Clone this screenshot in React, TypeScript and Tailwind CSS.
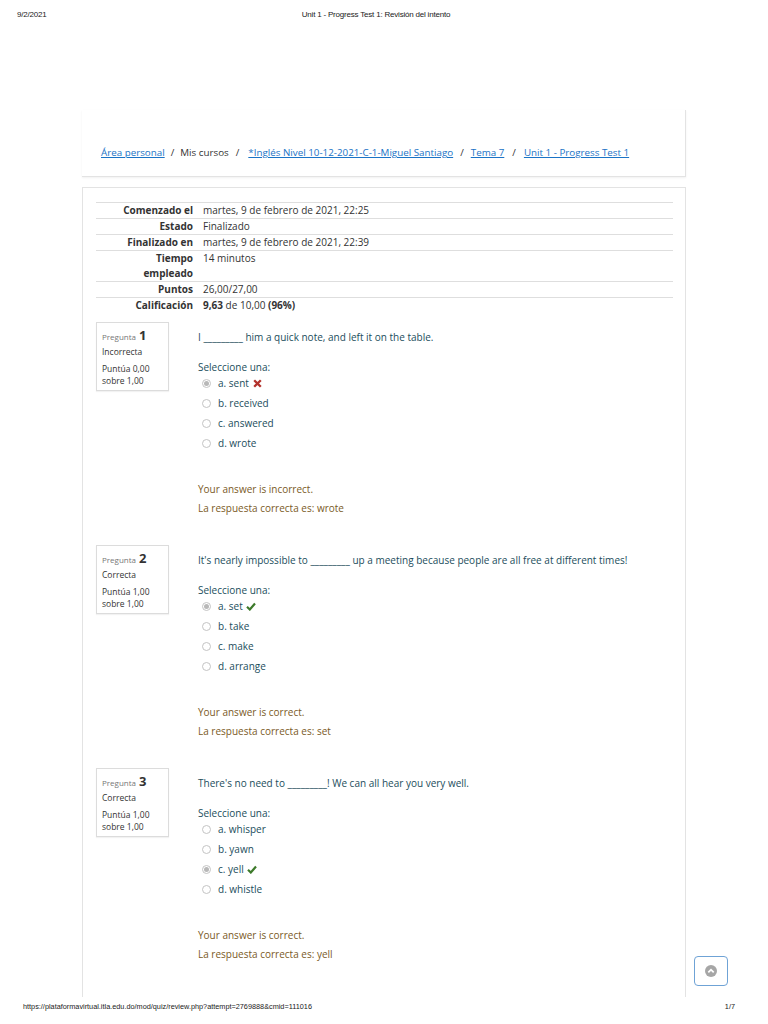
import { ReactNode } from "react";

type Option = { key: string; label: string; chosen?: boolean; mark?: "ok" | "bad" };

const questions: {
  n: number;
  state: string;
  score: string;
  text: string;
  options: Option[];
  feedback: string;
  right: string;
}[] = [
  {
    n: 1,
    state: "Incorrecta",
    score: "Puntúa 0,00",
    text: "I _________ him a quick note, and left it on the table.",
    options: [
      { key: "a", label: "sent", chosen: true, mark: "bad" },
      { key: "b", label: "received" },
      { key: "c", label: "answered" },
      { key: "d", label: "wrote" },
    ],
    feedback: "Your answer is incorrect.",
    right: "wrote",
  },
  {
    n: 2,
    state: "Correcta",
    score: "Puntúa 1,00",
    text: "It's nearly impossible to _________ up a meeting because people are all free at different times!",
    options: [
      { key: "a", label: "set", chosen: true, mark: "ok" },
      { key: "b", label: "take" },
      { key: "c", label: "make" },
      { key: "d", label: "arrange" },
    ],
    feedback: "Your answer is correct.",
    right: "set",
  },
  {
    n: 3,
    state: "Correcta",
    score: "Puntúa 1,00",
    text: "There's no need to _________! We can all hear you very well.",
    options: [
      { key: "a", label: "whisper" },
      { key: "b", label: "yawn" },
      { key: "c", label: "yell", chosen: true, mark: "ok" },
      { key: "d", label: "whistle" },
    ],
    feedback: "Your answer is correct.",
    right: "yell",
  },
];

const summary: [string, ReactNode][] = [
  ["Comenzado el", "martes, 9 de febrero de 2021, 22:25"],
  ["Estado", "Finalizado"],
  ["Finalizado en", "martes, 9 de febrero de 2021, 22:39"],
  ["Tiempo empleado", "14 minutos"],
  ["Puntos", "26,00/27,00"],
  [
    "Calificación",
    <>
      <b>9,63</b> de 10,00 <b>(96%)</b>
    </>,
  ],
];

const Radio = ({ checked }: { checked?: boolean }) => (
  <span className="w-[9px] h-[9px] rounded-full border border-[#c4c4c4] bg-white flex items-center justify-center shrink-0">
    {checked && <span className="w-[5px] h-[5px] rounded-full bg-[#b8b8b8]" />}
  </span>
);

const Check = () => (
  <svg width="10" height="9" viewBox="0 0 10 9" className="ml-[3px]">
    <path d="M1 4.8 L3.8 7.5 L9 1.5" fill="none" stroke="#3d7a2a" strokeWidth="2.2" />
  </svg>
);

const Cross = () => (
  <svg width="9" height="9" viewBox="0 0 9 9" className="ml-[4px]">
    <path d="M1.2 1.2 L7.8 7.8 M7.8 1.2 L1.2 7.8" stroke="#b3322c" strokeWidth="2.3" />
  </svg>
);

const Question = ({ q }: { q: (typeof questions)[number] }) => (
  <div className="flex h-[223px]">
    <div className="w-[73px] h-[69px] border border-[#dcdcdc] shadow-[0_1px_1px_rgba(0,0,0,0.05)] px-[5px] pt-[5px] text-[8.5px] leading-[12px] text-[#333] shrink-0">
      <div className="flex items-baseline gap-[3px]">
        <span className="text-[8px] text-[#777]">Pregunta</span>
        <span className="text-[13px] font-bold leading-[14px]">{q.n}</span>
      </div>
      <div className="mt-[3px]">{q.state}</div>
      <div className="mt-[5px]">{q.score}</div>
      <div>sobre 1,00</div>
    </div>
    <div className="ml-[29px] pt-[8px] text-[10px] font-medium text-[#1b4d5c]">
      <p className="leading-[14px]">{q.text}</p>
      <p className="mt-[16px] leading-[14px]">Seleccione una:</p>
      <div className="flex flex-col -mt-[1px]">
        {q.options.map((o) => (
          <div key={o.key} className="h-[20px] flex items-center pl-[4px]">
            <Radio checked={o.chosen} />
            <span className="ml-[7px]">
              {o.key}. {o.label}
            </span>
            {o.mark === "ok" && <Check />}
            {o.mark === "bad" && <Cross />}
          </div>
        ))}
      </div>
      <div className="mt-[29px] text-[#7a5a26] leading-[14px]">
        <p>{q.feedback}</p>
        <p className="mt-[5px]">La respuesta correcta es: {q.right}</p>
      </div>
    </div>
  </div>
);

export default function App() {
  return (
    <div className="relative w-[768px] h-[1024px] bg-white overflow-hidden font-['Open_Sans',sans-serif]">
      <header className="h-[110px] pt-[10px] px-[17px] flex text-[8px] leading-[10px] text-[#222] font-['Liberation_Sans',sans-serif] tracking-[-0.2px]">
        <span className="w-[100px]">9/2/2021</span>
        <span className="flex-1 text-center pr-[116px]">Unit 1 - Progress Test 1: Revisión del intento</span>
      </header>

      <div className="ml-[82px] w-[604px] h-[67px] border-r border-b border-[#e3e3e3] shadow-[0_1px_2px_rgba(0,0,0,0.06)] flex items-end pb-[15px] pl-[19px] text-[9.8px] text-[#333]">
        <a className="text-[#1a73c6] underline">Área personal</a>
        <span className="mx-[6px]">/</span>
        <span>Mis cursos</span>
        <span className="mx-[7px]">/</span>
        <a className="ml-[2px] text-[#1a73c6] underline">*Inglés Nivel 10-12-2021-C-1-Miguel Santiago</a>
        <span className="mx-[7px]">/</span>
        <a className="text-[#1a73c6] underline">Tema 7</a>
        <span className="mx-[8px]">/</span>
        <a className="text-[#1a73c6] underline">Unit 1 - Progress Test 1</a>
      </div>

      <main className="ml-[82px] mt-[10px] w-[604px] h-[810px] border-l border-r border-t border-[#e3e3e3] px-[13px] pt-[14px]">
        <table className="w-[577px] text-[10px] text-[#333]">
          <tbody>
            {summary.map(([label, value]) => (
              <tr key={label} className="border-t border-[#dedede] align-top">
                <th className="w-[107px] pr-[10px] text-right font-bold leading-[15px] p-0">
                  {label === "Tiempo empleado" ? (
                    <>
                      Tiempo
                      <br />
                      empleado
                    </>
                  ) : (
                    label
                  )}
                </th>
                <td className="leading-[15px]">{value}</td>
              </tr>
            ))}
          </tbody>
        </table>

        <div className="mt-[9px]">
          {questions.map((q) => (
            <Question key={q.n} q={q} />
          ))}
        </div>
      </main>

      <button className="absolute left-[694px] top-[956px] w-[34px] h-[30px] rounded-[4px] border border-[#6fa3d6] bg-white flex items-center justify-center">
        <svg width="12" height="12" viewBox="0 0 12 12">
          <circle cx="6" cy="6" r="6" fill="#a6a6a6" />
          <path d="M3.3 7.4 L6 4.7 L8.7 7.4" fill="none" stroke="#fff" strokeWidth="1.8" />
        </svg>
      </button>

      <footer className="absolute left-0 right-0 top-[1002px] px-[23px] flex justify-between text-[7.3px] leading-[9px] text-[#222] font-['Liberation_Sans',sans-serif]">
        <span>https://plataformavirtual.itla.edu.do/mod/quiz/review.php?attempt=2769888&amp;cmid=111016</span>
        <span className="pr-[10px]">1/7</span>
      </footer>
    </div>
  );
}
